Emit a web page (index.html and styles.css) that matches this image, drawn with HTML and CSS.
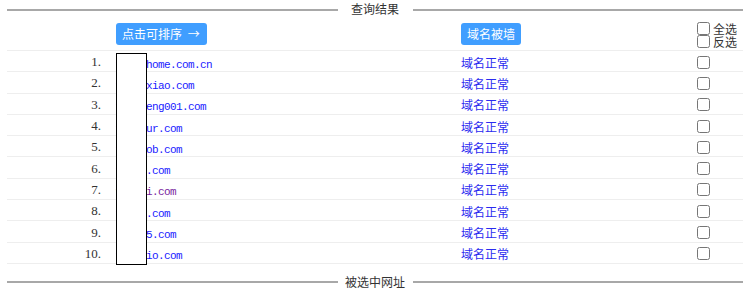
FILE: index.html
```html
<!DOCTYPE html>
<html lang="zh">
<head>
<meta charset="utf-8">
<title>查询结果</title>
<link rel="stylesheet" href="styles.css">
</head>
<body>
<div class="page">
  <div class="legend"><span class="line"></span><span class="legend-text">查询结果</span><span class="line"></span></div>
  <div class="table">
    <div class="head">
      <div class="cell num"></div>
      <div class="cell dom"><button class="btn">点击可排序 <span class="arrow">→</span></button></div>
      <div class="cell st"><button class="btn">域名被墙</button></div>
      <div class="cell chk">
        <label class="sel"><input type="checkbox">全选</label>
        <label class="sel"><input type="checkbox">反选</label>
      </div>
    </div>
    <div class="row"><div class="cell num">1.</div><div class="cell dom"><a class="link">wwwwwhome.com.cn</a></div><div class="cell st"><a class="ok">域名正常</a></div><div class="cell chk"><input type="checkbox"></div></div>
    <div class="row"><div class="cell num">2.</div><div class="cell dom"><a class="link">wwwwwxiao.com</a></div><div class="cell st"><a class="ok">域名正常</a></div><div class="cell chk"><input type="checkbox"></div></div>
    <div class="row"><div class="cell num">3.</div><div class="cell dom"><a class="link">wwwwweng001.com</a></div><div class="cell st"><a class="ok">域名正常</a></div><div class="cell chk"><input type="checkbox"></div></div>
    <div class="row"><div class="cell num">4.</div><div class="cell dom"><a class="link">wwwwwur.com</a></div><div class="cell st"><a class="ok">域名正常</a></div><div class="cell chk"><input type="checkbox"></div></div>
    <div class="row"><div class="cell num">5.</div><div class="cell dom"><a class="link">wwwwwob.com</a></div><div class="cell st"><a class="ok">域名正常</a></div><div class="cell chk"><input type="checkbox"></div></div>
    <div class="row"><div class="cell num">6.</div><div class="cell dom"><a class="link">wwwww.com</a></div><div class="cell st"><a class="ok">域名正常</a></div><div class="cell chk"><input type="checkbox"></div></div>
    <div class="row"><div class="cell num">7.</div><div class="cell dom"><a class="link visited">wwwwwi.com</a></div><div class="cell st"><a class="ok">域名正常</a></div><div class="cell chk"><input type="checkbox"></div></div>
    <div class="row"><div class="cell num">8.</div><div class="cell dom"><a class="link">wwwww.com</a></div><div class="cell st"><a class="ok">域名正常</a></div><div class="cell chk"><input type="checkbox"></div></div>
    <div class="row"><div class="cell num">9.</div><div class="cell dom"><a class="link">wwwww5.com</a></div><div class="cell st"><a class="ok">域名正常</a></div><div class="cell chk"><input type="checkbox"></div></div>
    <div class="row"><div class="cell num">10.</div><div class="cell dom"><a class="link">wwwwwio.com</a></div><div class="cell st"><a class="ok">域名正常</a></div><div class="cell chk"><input type="checkbox"></div></div>
    <div class="mask"></div>
  </div>
  <div class="legend bottom"><span class="line"></span><span class="legend-text">被选中网址</span><span class="line"></span></div>
</div>
</body>
</html>
```
FILE: styles.css
```css
* { box-sizing: border-box; }
html, body { margin: 0; padding: 0; background: #fff; }
body {
  font-family: "Noto Sans CJK SC", "Noto Sans", sans-serif;
  font-size: 12px;
  color: #333;
}
.page { padding: 3px 7px 0; }

.legend {
  display: flex;
  align-items: flex-start;
  height: 9px;
}
.legend .line {
  flex: 1;
  height: 2px;
  margin-top: 6px;
  background: #a8a8a8;
}
.legend-text {
  width: 75px;
  text-align: center;
  font-size: 12px;
  line-height: 12px;
  color: #333;
}
.legend.bottom { margin-top: 11px; height: 22px; }
.legend.bottom .line { margin-top: 6px; }
.legend.bottom .legend-text { line-height: 14px; }

.table { position: relative; }
.head, .row {
  display: grid;
  grid-template-columns: 109px 345px 236px 1fr;
  border-bottom: 1px solid #eeeeee;
}
.head { height: 39px; padding-top: 11px; align-items: start; }
.row { height: 21.3px; padding-top: 2px; align-items: center; }
.cell { min-width: 0; }
.num {
  text-align: right;
  padding-right: 15px;
  font-family: "Liberation Serif", serif;
  font-size: 13px;
  color: #333;
}
.btn {
  font-family: "Noto Sans CJK SC", sans-serif;
  font-size: 12px;
  line-height: 14px;
  color: #fff;
  background: #409eff;
  border: none;
  border-radius: 3px;
  padding: 4px 6px 4px 6px;
  height: 22px;
}
.arrow { margin-left: 3px; margin-right: 1px; }
.link {
  font-family: "Liberation Mono", monospace;
  font-size: 11px;
  letter-spacing: -0.6px;
  color: #1a1aff;
  white-space: nowrap;
}
.link.visited { color: #7a1fa0; }
.ok { color: #2b2bf0; font-size: 12px; }
.chk input { margin: 0; width: 13px; height: 13px; }
.row .chk { display: flex; align-items: center; }
.head .chk { display: flex; flex-direction: column; gap: 0; margin-top: -1px; }
.sel { display: flex; align-items: center; height: 13px; line-height: 13px; font-size: 12px; color: #333; }
.sel input { margin-right: 3px; }

.mask {
  position: absolute;
  left: 109px;
  top: 41px;
  width: 31px;
  height: 212px;
  background: #fff;
  border: 1px solid #000;
}
```
